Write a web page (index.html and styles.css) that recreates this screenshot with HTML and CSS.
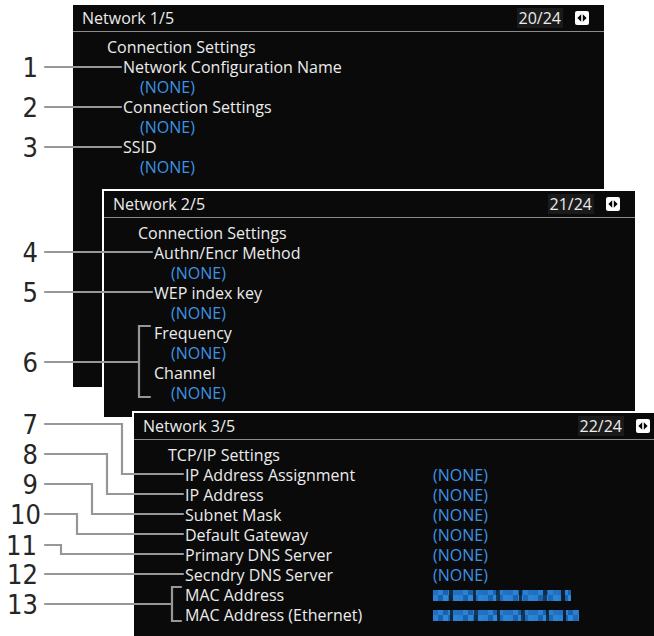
FILE: index.html
```html
<!DOCTYPE html>
<html lang="en">
<head>
  <meta charset="UTF-8">
  <meta name="viewport" content="width=device-width, initial-scale=1.0">
  <title>Network Settings</title>
  <link rel="stylesheet" href="styles.css">
</head>
<body>
  <div class="figure">
    <svg width="0" height="0" class="defs">
      <defs>
        <pattern id="mosaic" width="25" height="11" patternUnits="userSpaceOnUse">
          <rect x="0" y="0" width="5" height="5" fill="#1f6fc4"/>
          <rect x="5" y="0" width="5" height="5" fill="#2a82d6"/>
          <rect x="10" y="0" width="5" height="5" fill="#1a60ac"/>
          <rect x="15" y="0" width="5" height="5" fill="#2a7fd0"/>
          <rect x="20" y="0" width="5" height="5" fill="#2372c2"/>
          <rect x="0" y="5" width="5" height="6" fill="#2a80d2"/>
          <rect x="5" y="5" width="5" height="6" fill="#1b62ad"/>
          <rect x="10" y="5" width="5" height="6" fill="#2d88da"/>
          <rect x="15" y="5" width="5" height="6" fill="#1d68b8"/>
          <rect x="20" y="5" width="5" height="6" fill="#2b84d4"/>
        </pattern>
      </defs>
    </svg>

    <section class="panel panel-1">
      <header class="panel-head">
        <span class="title">Network 1/5</span>
        <span class="count">20/24</span>
        <svg class="nav-icon" viewBox="0 0 14 14"><rect width="14" height="14" rx="2" fill="#fff"/><polygon points="6.2,3.2 2.4,7 6.2,10.8" fill="#000"/><polygon points="7.8,3.2 11.6,7 7.8,10.8" fill="#000"/></svg>
      </header>
      <div class="panel-body">
        <div class="group">Connection Settings</div>
        <div class="item">Network Configuration Name</div>
        <div class="value">(NONE)</div>
        <div class="item">Connection Settings</div>
        <div class="value">(NONE)</div>
        <div class="item">SSID</div>
        <div class="value">(NONE)</div>
      </div>
    </section>

    <section class="panel panel-2">
      <header class="panel-head">
        <span class="title">Network 2/5</span>
        <span class="count">21/24</span>
        <svg class="nav-icon" viewBox="0 0 14 14"><rect width="14" height="14" rx="2" fill="#fff"/><polygon points="6.2,3.2 2.4,7 6.2,10.8" fill="#000"/><polygon points="7.8,3.2 11.6,7 7.8,10.8" fill="#000"/></svg>
      </header>
      <div class="panel-body">
        <div class="group">Connection Settings</div>
        <div class="item">Authn/Encr Method</div>
        <div class="value">(NONE)</div>
        <div class="item">WEP index key</div>
        <div class="value">(NONE)</div>
        <div class="item">Frequency</div>
        <div class="value">(NONE)</div>
        <div class="item">Channel</div>
        <div class="value">(NONE)</div>
      </div>
    </section>

    <section class="panel panel-3">
      <header class="panel-head">
        <span class="title">Network 3/5</span>
        <span class="count">22/24</span>
        <svg class="nav-icon" viewBox="0 0 14 14"><rect width="14" height="14" rx="2" fill="#fff"/><polygon points="6.2,3.2 2.4,7 6.2,10.8" fill="#000"/><polygon points="7.8,3.2 11.6,7 7.8,10.8" fill="#000"/></svg>
      </header>
      <div class="panel-body">
        <div class="group">TCP/IP Settings</div>
        <div class="table">
          <span>IP Address Assignment</span><span class="blue">(NONE)</span>
          <span>IP Address</span><span class="blue">(NONE)</span>
          <span>Subnet Mask</span><span class="blue">(NONE)</span>
          <span>Default Gateway</span><span class="blue">(NONE)</span>
          <span>Primary DNS Server</span><span class="blue">(NONE)</span>
          <span>Secndry DNS Server</span><span class="blue">(NONE)</span>
          <span>MAC Address</span>
          <span class="masked">
            <svg width="138" height="11"><rect width="138" height="11" fill="url(#mosaic)"/><rect x="16" width="4" height="11" fill="#0a0a0a" opacity=".7"/><rect x="40" width="3" height="11" fill="#0a0a0a" opacity=".7"/><rect x="63" width="4" height="11" fill="#0a0a0a" opacity=".6"/><rect x="86" width="3" height="11" fill="#0a0a0a" opacity=".7"/><rect x="110" width="4" height="11" fill="#0a0a0a" opacity=".6"/><rect x="128" width="4" height="11" fill="#0a0a0a" opacity=".8"/></svg>
          </span>
          <span>MAC Address (Ethernet)</span>
          <span class="masked">
            <svg width="146" height="11"><rect width="146" height="11" fill="url(#mosaic)"/><rect x="17" width="3" height="11" fill="#0a0a0a" opacity=".7"/><rect x="41" width="4" height="11" fill="#0a0a0a" opacity=".6"/><rect x="64" width="3" height="11" fill="#0a0a0a" opacity=".7"/><rect x="88" width="4" height="11" fill="#0a0a0a" opacity=".6"/><rect x="113" width="3" height="11" fill="#0a0a0a" opacity=".7"/><rect x="130" width="3" height="11" fill="#0a0a0a" opacity=".8"/></svg>
          </span>
        </div>
      </div>
    </section>

    <svg class="callouts" width="654" height="636" viewBox="0 0 654 636">
      <g class="leaders">
        <path d="M45 67 H121"/>
        <path d="M45 107 H121"/>
        <path d="M45 147 H121"/>
        <path d="M45 252 H152"/>
        <path d="M45 292 H152"/>
        <path d="M45 362 H139"/>
        <path d="M150 326 H139 V397 H150"/>
        <path d="M45 424 H122 V474 H183"/>
        <path d="M45 454 H107 V494 H183"/>
        <path d="M45 484 H92 V514 H183"/>
        <path d="M45 514 H77 V534 H183"/>
        <path d="M45 545 H61 V554 H183"/>
        <path d="M45 574 H183"/>
        <path d="M45 604 H172"/>
        <path d="M181 587 H172 V621 H181"/>
      </g>
      <g class="nums">
        <text x="38" y="67">1</text>
        <text x="38" y="107">2</text>
        <text x="38" y="147">3</text>
        <text x="38" y="252">4</text>
        <text x="38" y="292">5</text>
        <text x="38" y="362">6</text>
        <text x="38" y="424">7</text>
        <text x="38" y="454">8</text>
        <text x="38" y="484">9</text>
        <text x="41" y="514">10</text>
        <text x="37" y="545">11</text>
        <text x="38" y="574">12</text>
        <text x="38" y="604">13</text>
      </g>
    </svg>
  </div>
</body>
</html>
```
FILE: styles.css
```css
body {
  margin: 0;
  background: #fff;
  font-family: "Open Sans", "DejaVu Sans", sans-serif;
}

.figure {
  position: relative;
  width: 654px;
  height: 636px;
  overflow: hidden;
}

.defs {
  position: absolute;
}

/* camera menu screens */
.panel {
  position: absolute;
  background: #0a0a0a;
  color: #ececec;
  font-size: 16px;
}

.panel-1 {
  left: 73px;
  top: 5px;
  width: 531px;
  height: 382px;
}

.panel-2 {
  left: 104px;
  top: 191px;
  width: 531px;
  height: 226px;
  box-shadow: 0 0 0 2px #fff;
}

.panel-3 {
  left: 134px;
  top: 413px;
  width: 520px;
  height: 240px;
  box-shadow: 0 0 0 2px #fff;
}

.panel-head {
  display: flex;
  align-items: center;
  height: 26px;
  padding: 0 15px 0 9px;
  border-bottom: 1px solid #8c8c8c;
}

.panel-3 .panel-head {
  padding-right: 4px;
}

.title {
  flex: 1;
}

.count {
  background: #1a1a1a;
  padding: 0 2px;
  line-height: 20px;
}

.nav-icon {
  width: 14px;
  height: 14px;
  margin-left: 12px;
}

.panel-body {
  padding: 5px 0 0 34px;
  line-height: 20px;
}

.item {
  margin-left: 16px;
}

.value {
  margin-left: 33px;
  color: #3d93e4;
}

.table {
  display: grid;
  grid-template-columns: 248px auto;
  margin-left: 17px;
}

.blue {
  color: #3d93e4;
}

.masked {
  display: flex;
  align-items: center;
}

/* callout numbers and leader lines */
.callouts {
  position: absolute;
  left: 0;
  top: 0;
  pointer-events: none;
}

.leaders path {
  fill: none;
  stroke: #979797;
  stroke-width: 2.2;
  stroke-linecap: round;
}

.nums text {
  font-family: "Liberation Sans Narrow", "DejaVu Sans Condensed", sans-serif;
  font-size: 27px;
  fill: #262626;
  text-anchor: end;
  dominant-baseline: central;
}
```
